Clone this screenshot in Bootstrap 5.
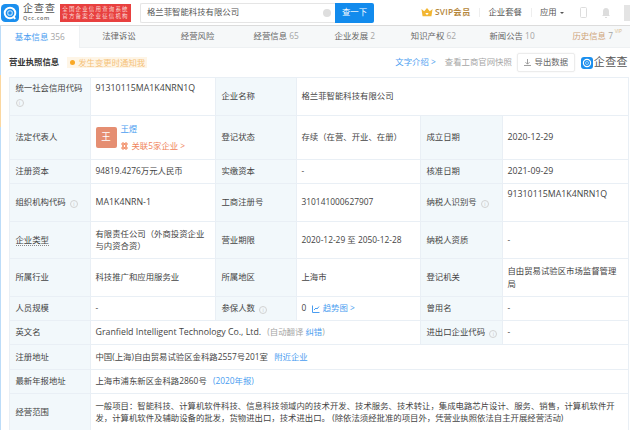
<!DOCTYPE html>
<html lang="zh-CN">

<head>
    <meta charset="UTF-8" />
    <meta name="viewport" content="width=device-width, initial-scale=1" />
    <title>企查查 - 基本信息</title>

    <link href="https://cdn.jsdelivr.net/npm/bootstrap@5.3.0/dist/css/bootstrap.min.css" rel="stylesheet" />

    <style>
        html, body {
            height: 430px;
            overflow: hidden;
        }

        body {
            width: 630px;
            background-color: #fff;
            color: #333;
            font-family: "Open Sans", "Noto Sans CJK SC", sans-serif;
            font-size: 8.4px;
            line-height: 12.5px;
        }

        a {
            color: #4a9df0;
            text-decoration: none;
        }

        .top-bar {
            height: 26px;
            border-bottom: 1px solid #dcdcdc;
            padding-left: 1px;
            overflow: hidden;
        }

        .brand-box {
            width: 33px;
            margin: 1px 4px 0;
        }

        .brand-txt {
            font-size: 10px;
            line-height: 14px;
            letter-spacing: 1px;
            color: #555;
            white-space: nowrap;
        }

        .brand-sub {
            font-size: 5.5px;
            line-height: 7px;
            letter-spacing: .6px;
            color: #666;
            font-weight: 600;
        }

        .gov-tag {
            width: 71px;
            height: 18px;
            background-color: #e8403f;
            color: #fbdcd6;
            font-size: 5.5px;
            line-height: 7.5px;
            letter-spacing: 1.15px;
            padding-top: 2px;
            text-align: center;
            white-space: nowrap;
        }

        .search-box {
            width: 195px;
            height: 20px;
            border: 1px solid #e5e5e5;
            border-right: 0;
            border-radius: 2px 0 0 2px;
            padding-left: 6px;
            margin-left: 9px;
            font-size: 8.4px;
            color: #555;
        }

        .clear-dot {
            width: 8px;
            height: 8px;
            background-color: #dedede;
        }

        .search-btn {
            width: 39px;
            height: 20px;
            background-color: #128bed;
            color: #fff;
            border-radius: 0 2px 2px 0;
            font-size: 8.4px;
        }

        .top-links {
            font-size: 8.4px;
            color: #555;
            white-space: nowrap;
        }

        .crown-ico {
            margin-left: 47px;
        }

        .svip-txt {
            color: #b5863a;
            font-weight: 600;
            letter-spacing: .2px;
            margin-left: 2px;
        }

        .sep-v {
            width: 1px;
            height: 9px;
            background-color: #eee;
            margin: 0 8px 0 9px;
        }

        .caret-down {
            width: 0;
            height: 0;
            border: 2px solid transparent;
            border-top: 2.5px solid #555;
            margin: 2px 0 0 3px;
        }

        .phone-ico {
            margin-left: 16px;
        }

        .bell-ico {
            margin-left: 14px;
        }

        .avatar-top {
            width: 8px;
            height: 16px;
            background-color: #e4e4e4;
            margin-left: 14px;
        }

        .tab-bar {
            height: 22px;
            background-color: #f6f8f9;
            border-bottom: 1px solid #eef1f3;
            margin-left: 1px;
        }

        .tab-item {
            width: 79px;
            color: #666;
            font-size: 8.4px;
        }

        .tab-item span {
            color: #a5a5a5;
        }

        .tab-on {
            background-color: #fff;
            color: #4a9df0;
            height: 22px;
            border-right: 1px solid #eef1f3;
        }

        .tab-hist {
            color: #cfa47a;
            padding-left: 4px;
        }

        .vip-mini {
            color: #d9b98a;
            font-size: 5px;
            line-height: 5px;
            top: 3px;
            right: 8px;
        }

        .side-blue {
            width: 1px;
            background-color: #bcdcf8;
            top: 26px;
            bottom: 0;
            left: 0;
        }

        .side-orange {
            width: 1px;
            background-color: #fbd7a0;
            top: 75px;
            height: 52px;
            left: 0;
        }

        .sect-bar {
            height: 29px;
            padding: 0 2px 0 9px;
        }

        .sect-title {
            color: #333;
            font-weight: 700;
        }

        .notice-tag {
            height: 11px;
            background-color: #fef5e6;
            color: #f5c27a;
            padding: 0 2px;
            font-size: 8.4px;
            margin-left: 8px;
            line-height: 11px;
        }

        .notice-dot {
            width: 5px;
            height: 5px;
            background-color: #f9a825;
            margin: 0 3px 0 1px;
        }

        .gray-link {
            color: #a5a5a5;
            margin-left: 9px;
        }

        .export-btn {
            width: 58px;
            height: 19px;
            border: 1px solid #ececec;
            border-radius: 2px;
            box-shadow: 0 0 2px #f0f0f0;
            color: #666;
            margin-left: 5px;
        }

        .wm-ico {
            margin-left: 6px;
        }

        .wm-txt {
            font-size: 11px;
            letter-spacing: .4px;
            color: #555;
            margin-left: 1px;
        }

        .info-wrap {
            padding-left: 9px;
        }

        .info-tbl {
            table-layout: fixed;
            width: 619px;
            margin: 0;
            border-color: #e9eff5;
            color: #444;
        }

        .info-tbl > tbody > tr > * {
            padding: 0 5px 0 4.5px;
            vertical-align: middle;
            border: 1px solid #e9eff5;
            font-weight: 400;
            background-color: transparent;
            box-shadow: none;
            color: #444;
        }

        .info-tbl > tbody > tr > th {
            background-color: #f2f8fb;
            padding-left: 5.5px;
            padding-right: 0;
            white-space: nowrap;
        }

        .info-tbl .cell-top {
            vertical-align: top;
            padding-top: 4px;
        }

        .rh-38 { height: 38px; }
        .rh-44 { height: 44px; }
        .rh-24 { height: 24px; }
        .rh-37 { height: 37px; }
        .rh-25 { height: 25px; }

        .lat-txt {
            font-size: 8.8px;
        }

        .tip-i {
            display: inline-block;
            width: 8px;
            height: 8px;
            border: 1px solid #d2d2d2;
            border-radius: 50%;
            color: #c5c5c5;
            font-size: 5px;
            line-height: 6px;
            text-align: center;
            vertical-align: -1px;
            margin-left: 2px;
        }

        .person-box {
            width: 21px;
            height: 21px;
            background-color: #e58e72;
            color: #fff;
            border-radius: 2px;
            font-size: 9.5px;
        }

        .assoc-txt {
            color: #f0845a;
        }

        .mute-txt {
            color: #a5a5a5;
        }

        .under-dot {
            border-bottom: 1px dotted #888;
        }
    </style>
</head>

<body class="position-relative">

    <div class="side-blue position-absolute"></div>
    <div class="side-orange position-absolute"></div>

    <header class="top-bar d-flex align-items-center">
        <svg class="flex-shrink-0" width="18" height="18" viewBox="0 0 17 17">
            <rect width="17" height="17" rx="4" fill="#1b8fee" />
            <circle cx="8.500" cy="8.500" r="5" fill="none" stroke="#fff" stroke-width="1.800" />
            <circle cx="8.500" cy="8.500" r="2.200" fill="none" stroke="#bfe0fb" stroke-width="1" />
            <path d="M11.500 12l2 2" stroke="#fff" stroke-width="1.800" />
        </svg>
        <div class="brand-box flex-shrink-0 align-self-start">
            <div class="brand-txt">企查查</div>
            <div class="brand-sub">Qcc.com</div>
        </div>
        <div class="gov-tag flex-shrink-0">全国企业信用查询系统<br />官方备案企业征信机构</div>
        <div class="search-box d-flex align-items-center justify-content-between pe-1 flex-shrink-0">
            <span>格兰菲智能科技有限公司</span>
            <span class="clear-dot rounded-circle"></span>
        </div>
        <div class="search-btn d-flex align-items-center justify-content-center flex-shrink-0">查一下</div>
        <div class="top-links d-flex align-items-center flex-shrink-0">
            <svg class="crown-ico" width="12" height="10" viewBox="0 0 10 9">
                <path d="M0 1l2.500 2L5 0l2.500 3L10 1 9 7.500H1z" fill="#f2b632" />
                <path d="M3.500 4.500h3L5 6.500z" fill="#fff" />
            </svg>
            <span class="svip-txt">SVIP会员</span>
            <span class="sep-v"></span>
            <span>企业套餐</span>
            <span class="sep-v"></span>
            <span>应用</span>
            <span class="caret-down"></span>
            <svg class="phone-ico" width="8" height="11" viewBox="0 0 8 11">
                <rect x=".5" y=".5" width="6" height="10" rx="1" fill="#fff" stroke="#ddd" />
            </svg>
            <svg class="bell-ico" width="8" height="10" viewBox="0 0 8 10">
                <path d="M4 0c2 0 3 1.500 3 3.500V7l1 1H0l1-1V3.500C1 1.500 2 0 4 0zM3 9h2v1H3z" fill="#ddd" />
            </svg>
            <span class="avatar-top"></span>
        </div>
    </header>

    <nav class="tab-bar d-flex">
        <div class="tab-item tab-on d-flex align-items-center justify-content-center">基本信息&nbsp;<span>356</span></div>
        <div class="tab-item d-flex align-items-center justify-content-center">法律诉讼</div>
        <div class="tab-item d-flex align-items-center justify-content-center">经营风险</div>
        <div class="tab-item d-flex align-items-center justify-content-center">经营信息&nbsp;<span>65</span></div>
        <div class="tab-item d-flex align-items-center justify-content-center">企业发展&nbsp;<span>2</span></div>
        <div class="tab-item d-flex align-items-center justify-content-center">知识产权&nbsp;<span>62</span></div>
        <div class="tab-item d-flex align-items-center justify-content-center">新闻公告&nbsp;<span>10</span></div>
        <div class="tab-item tab-hist d-flex align-items-center justify-content-center position-relative">历史信息&nbsp;<span>7</span>
            <b class="vip-mini position-absolute fw-normal">VIP</b>
        </div>
    </nav>

    <section class="sect-bar d-flex align-items-center">
        <span class="sect-title">营业执照信息</span>
        <span class="notice-tag d-flex align-items-center"><i class="notice-dot rounded-circle"></i>发生变更时通知我</span>
        <a class="ms-auto" href="#">文字介绍 &gt;</a>
        <span class="gray-link">查看工商官网快照</span>
        <div class="export-btn d-flex align-items-center justify-content-center">
            <svg class="me-1" width="7" height="7" viewBox="0 0 7 7">
                <path d="M3.500 0v5M1.500 3.200l2 2 2-2M0 6.500h7" fill="none" stroke="#888" stroke-width=".8" />
            </svg>
            导出数据
        </div>
        <svg class="wm-ico" width="12" height="12" viewBox="0 0 12 12">
            <rect width="12" height="12" rx="3" fill="#1b8fee" />
            <circle cx="6" cy="6" r="3.600" fill="none" stroke="#fff" stroke-width="1.200" />
            <circle cx="6" cy="6" r="1.500" fill="none" stroke="#cfe7fc" stroke-width=".7" />
        </svg>
        <span class="wm-txt">企查查</span>
    </section>

    <div class="info-wrap">
        <table class="table info-tbl">
            <colgroup>
                <col width="81" />
                <col width="125" />
                <col width="81" />
                <col width="124" />
                <col width="82" />
                <col width="126" />
            </colgroup>
            <tbody>
                <tr class="rh-38">
                    <th class="cell-top">统一社会信用代码<br /><i class="tip-i fst-normal ms-0 mt-1">i</i></th>
                    <td class="cell-top lat-txt">91310115MA1K4NRN1Q</td>
                    <th>企业名称</th>
                    <td colspan="3">格兰菲智能科技有限公司</td>
                </tr>
                <tr class="rh-44">
                    <th>法定代表人</th>
                    <td>
                        <div class="d-flex align-items-center gap-1">
                            <div class="person-box d-flex align-items-center justify-content-center flex-shrink-0">王</div>
                            <div>
                                <a class="d-block" href="#">王煜</a>
                                <span class="assoc-txt text-nowrap d-flex align-items-center gap-1 mt-1">
                                    <svg width="7" height="8" viewBox="0 0 7 8">
                                        <path d="M1 1h2v2H1zM4 1h2v2H4zM1 5h2v2H1zM4 5h2v2H4zM3 2h1M3 6h1M2 3v2M5 3v2" fill="none" stroke="#f0845a" />
                                    </svg>
                                    关联5家企业 &gt;
                                </span>
                            </div>
                        </div>
                    </td>
                    <th>登记状态</th>
                    <td>存续（在营、开业、在册）</td>
                    <th>成立日期</th>
                    <td class="lat-txt">2020-12-29</td>
                </tr>
                <tr class="rh-24">
                    <th>注册资本</th>
                    <td>94819.4276万元人民币</td>
                    <th>实缴资本</th>
                    <td>-</td>
                    <th>核准日期</th>
                    <td class="lat-txt">2021-09-29</td>
                </tr>
                <tr class="rh-38">
                    <th>组织机构代码 <i class="tip-i fst-normal">i</i></th>
                    <td class="lat-txt">MA1K4NRN-1</td>
                    <th>工商注册号</th>
                    <td>310141000627907</td>
                    <th>纳税人识别号 <i class="tip-i fst-normal">i</i></th>
                    <td class="cell-top lat-txt">91310115MA1K4NRN1Q</td>
                </tr>
                <tr class="rh-37">
                    <th><span class="under-dot">企业类型</span></th>
                    <td>有限责任公司（外商投资企业与内资合资）</td>
                    <th>营业期限</th>
                    <td>2020-12-29 至 2050-12-28</td>
                    <th>纳税人资质</th>
                    <td>-</td>
                </tr>
                <tr class="rh-38">
                    <th>所属行业</th>
                    <td>科技推广和应用服务业</td>
                    <th>所属地区</th>
                    <td>上海市</td>
                    <th>登记机关</th>
                    <td>自由贸易试验区市场监督管理局</td>
                </tr>
                <tr class="rh-24">
                    <th>人员规模</th>
                    <td>-</td>
                    <th>参保人数 <i class="tip-i fst-normal">i</i></th>
                    <td>0
                        <svg class="ms-1" width="8" height="8" viewBox="0 0 8 8">
                            <path d="M.5 .5v7h7M2 5l2-2 1 1 2-2.500" fill="none" stroke="#4a9df0" />
                        </svg>
                        <a href="#">趋势图 &gt;</a>
                    </td>
                    <th>曾用名</th>
                    <td>-</td>
                </tr>
                <tr class="rh-24">
                    <th>英文名</th>
                    <td colspan="3"><span class="lat-txt">Granfield Intelligent Technology Co., Ltd.</span> <span class="mute-txt ms-1">(自动翻译 <a href="#">纠错</a>)</span></td>
                    <th>进出口企业代码 <i class="tip-i fst-normal">i</i></th>
                    <td>-</td>
                </tr>
                <tr class="rh-25">
                    <th>注册地址</th>
                    <td colspan="5">中国(上海)自由贸易试验区金科路2557号201室 <a href="#" class="ms-1">附近企业</a></td>
                </tr>
                <tr class="rh-24">
                    <th>最新年报地址</th>
                    <td colspan="5">上海市浦东新区金科路2860号 <a href="#" class="ms-1">(2020年报)</a></td>
                </tr>
                <tr class="rh-37">
                    <th>经营范围</th>
                    <td colspan="5">一般项目：智能科技、计算机软件科技、信息科技领域内的技术开发、技术服务、技术转让，集成电路芯片设计、服务、销售，计算机软件开发，计算机软件及辅助设备的批发，货物进出口，技术进出口。 (除依法须经批准的项目外，凭营业执照依法自主开展经营活动)</td>
                </tr>
            </tbody>
        </table>
    </div>

    <script src="https://cdn.jsdelivr.net/npm/bootstrap@5.3.0/dist/js/bootstrap.bundle.min.js"></script>

</body>

</html>
